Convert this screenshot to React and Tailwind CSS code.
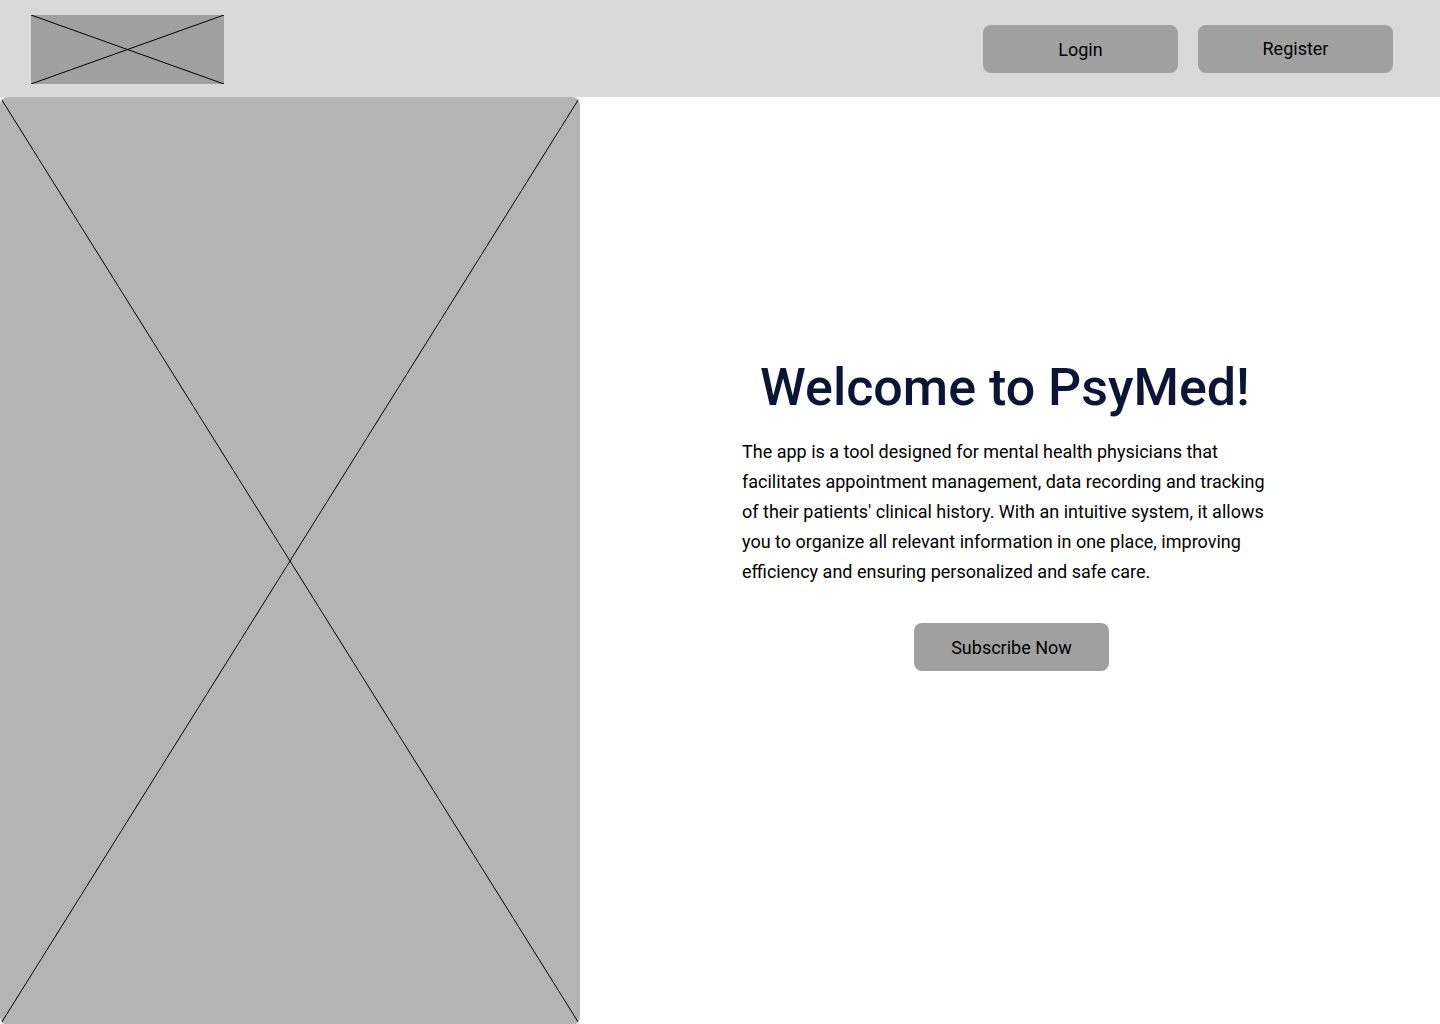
import React from "react";

function XBox({ className, children }) {
  return (
    <div className={`relative overflow-hidden ${className}`}>
      <svg className="absolute inset-0 h-full w-full" viewBox="0 0 100 100" preserveAspectRatio="none">
        <line x1="0" y1="0" x2="100" y2="100" stroke="#000" strokeWidth="1" vectorEffect="non-scaling-stroke" />
        <line x1="100" y1="0" x2="0" y2="100" stroke="#000" strokeWidth="1" vectorEffect="non-scaling-stroke" />
      </svg>
      {children}
    </div>
  );
}

export default function App() {
  return (
    <div className="flex h-[1024px] w-[1440px] flex-col overflow-hidden bg-white font-['Roboto',sans-serif]">
      <header className="flex h-[97px] shrink-0 items-start justify-between bg-[#d9d9d9] pl-[31px] pr-[47px]">
        <XBox className="mt-[15px] h-[69px] w-[193px] bg-[#a0a0a0]" />
        <div className="mt-[25px] flex gap-5">
          <button className="h-12 w-[195px] rounded-lg bg-[#a0a0a0] pt-px text-[18px] text-black">Login</button>
          <button className="h-12 w-[195px] rounded-lg bg-[#a0a0a0] pb-px text-[18px] text-black">Register</button>
        </div>
      </header>
      <main className="flex flex-1">
        <XBox className="h-[928px] w-[580px] shrink-0 rounded-lg bg-[#b5b4b5]" />
        <section className="flex flex-1 justify-start pl-[162px] pt-[256px]">
          <div className="flex w-[526px] flex-col items-center">
            <h1 className="text-center text-[52px] font-medium leading-[70px] text-[#0b1535]">
              Welcome to PsyMed!
            </h1>
            <p className="mt-[14px] w-full text-[18px] leading-[30px] text-black">
              The app is a tool designed for mental health physicians that facilitates appointment management, data recording and tracking of their patients' clinical history. With an intuitive system, it allows you to organize all relevant information in one place, improving efficiency and ensuring personalized and safe care.
            </p>
            <button className="ml-[172px] mt-[36px] h-12 w-[195px] self-start rounded-lg bg-[#a0a0a0] text-[18px] text-black">
              Subscribe Now
            </button>
          </div>
        </section>
      </main>
    </div>
  );
}
